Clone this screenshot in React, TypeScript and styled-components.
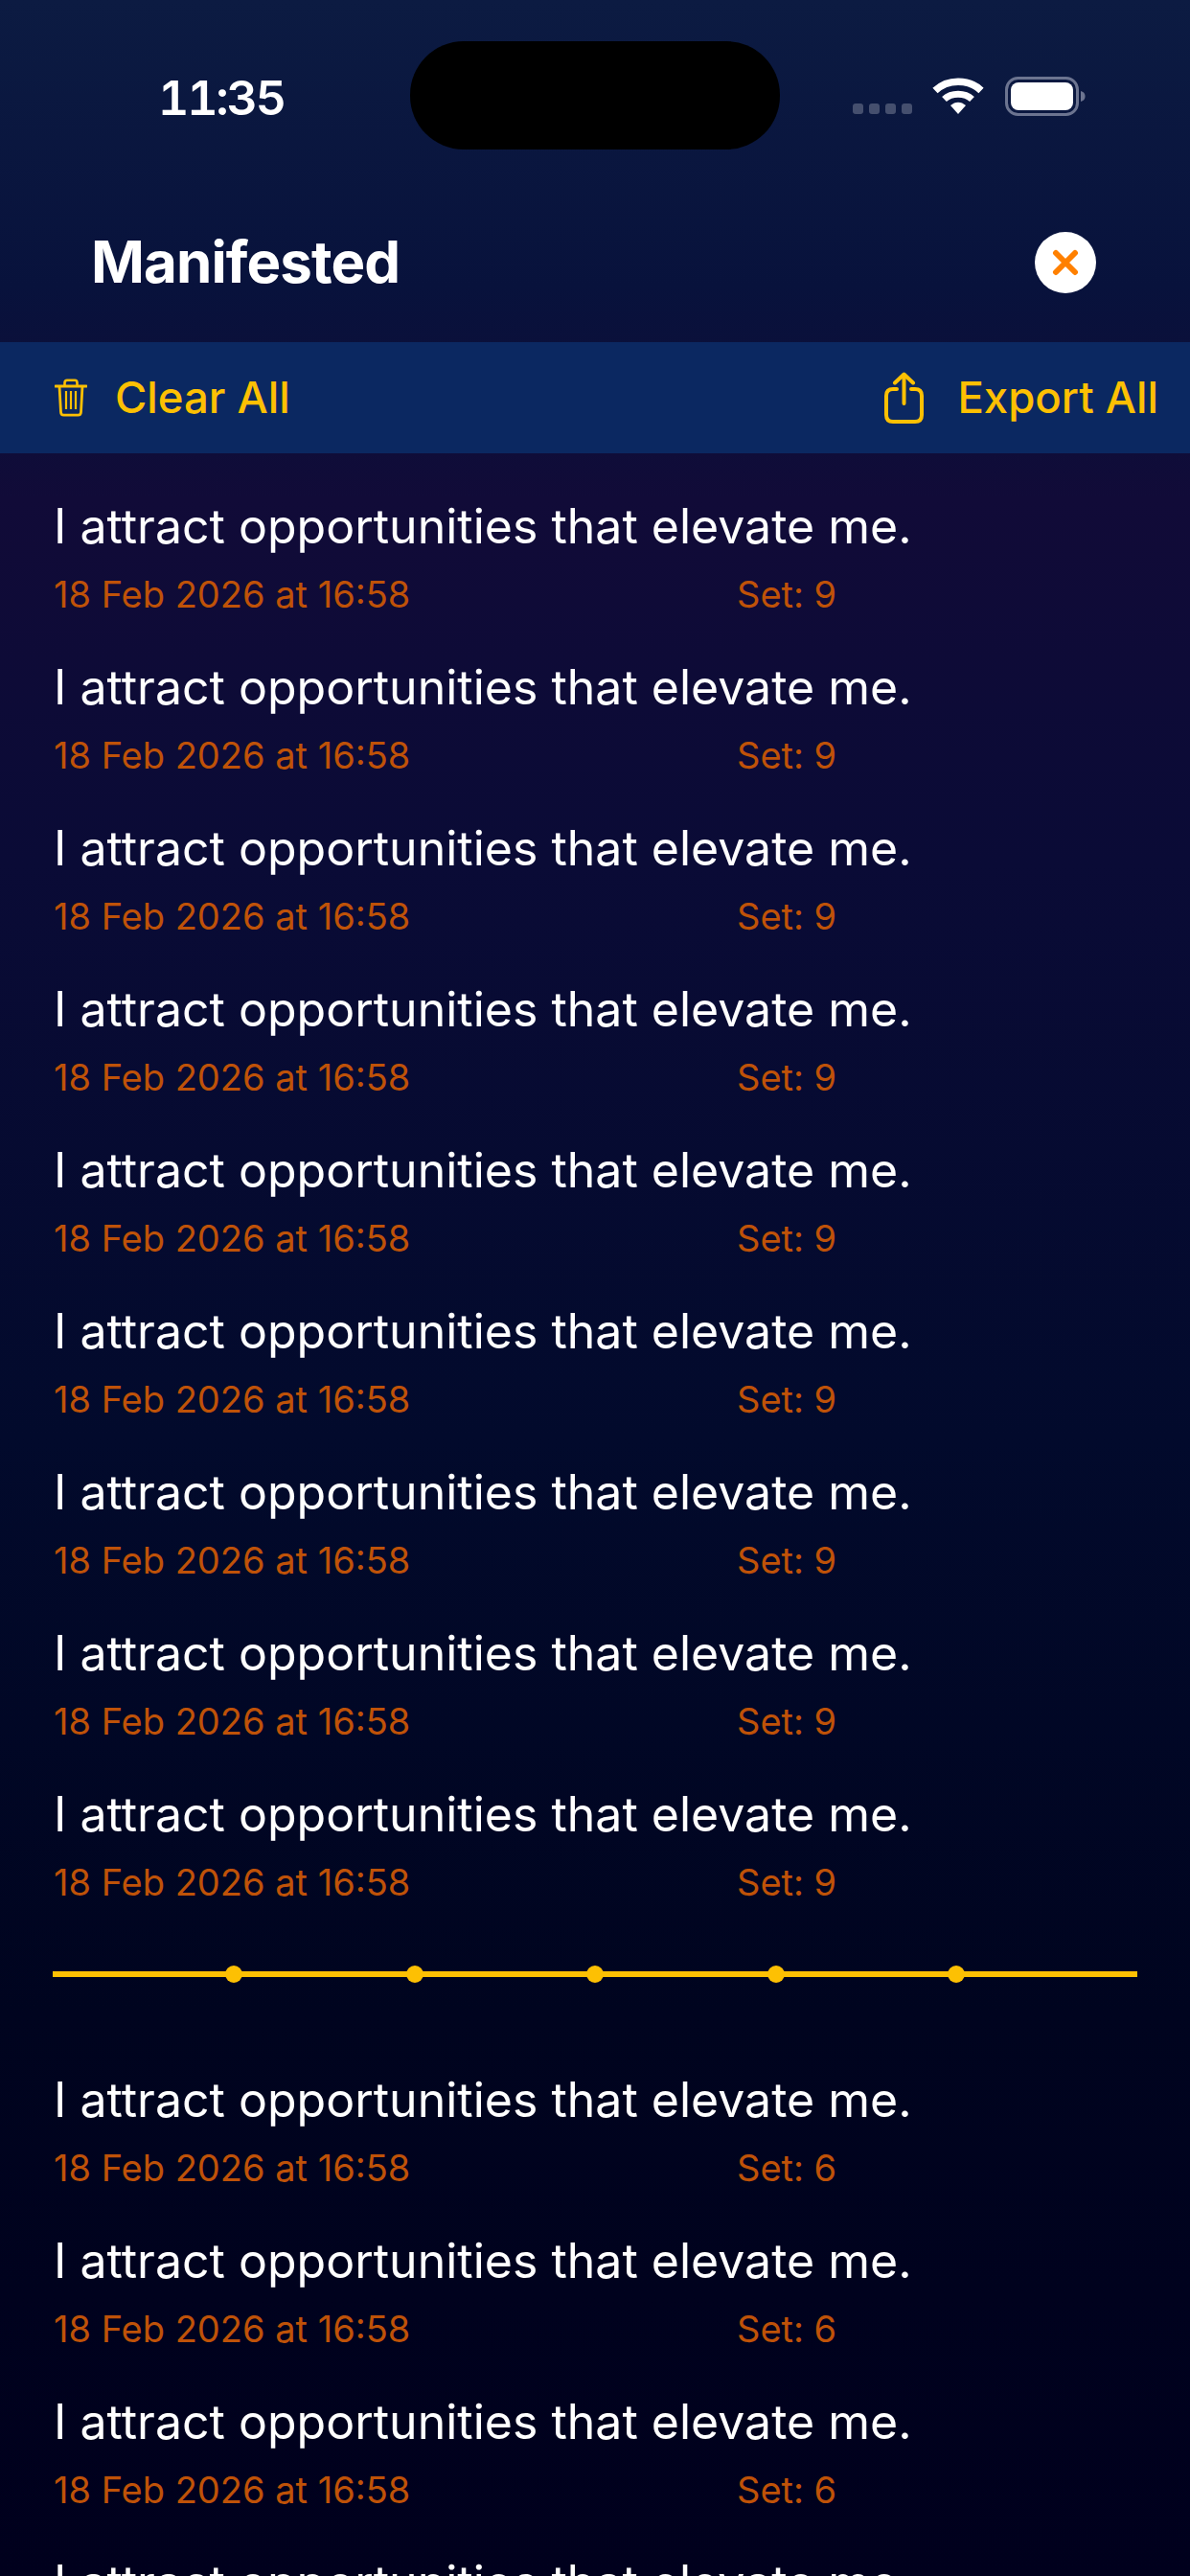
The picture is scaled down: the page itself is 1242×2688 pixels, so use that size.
import React from 'react';
import styled, { createGlobalStyle } from 'styled-components';

const GlobalStyle = createGlobalStyle`
  html, body {
    margin: 0;
    padding: 0;
    background: #00001e;
  }
  body {
    font-family: Inter, "Liberation Sans", sans-serif;
  }
`;

const Screen = styled.div`
  width: 1242px;
  height: 2688px;
  overflow: hidden;
  display: flex;
  flex-direction: column;
  background: linear-gradient(
    180deg,
    #0c1b42 0,
    #08123c 300px,
    #110b38 520px,
    #0a0b36 900px,
    #020a2c 1500px,
    #00041f 2100px,
    #00001d 2688px
  );
`;

const StatusBar = styled.div`
  height: 156px;
  flex: none;
  padding-top: 43px;
  box-sizing: border-box;
  display: grid;
  grid-template-columns: 428px 386px 1fr;
`;

const Time = styled.div`
  padding: 31px 0 0 165px;
  font-size: 50px;
  line-height: 56px;
  font-weight: 600;
  font-variant-numeric: tabular-nums;
  letter-spacing: -2.2px;
  color: #fff;
`;

const Island = styled.div`
  height: 113px;
  background: #000;
  border-radius: 56px;
`;

const StatusIcons = styled.div`
  display: flex;
  align-items: flex-start;
  padding: 37px 0 0 76px;
`;

const Signal = styled.div`
  display: flex;
  gap: 6px;
  margin-top: 28px;
  margin-right: 21px;
`;

const SignalDot = styled.span`
  width: 11px;
  height: 11px;
  border-radius: 3px;
  background: #454f6e;
`;

const WifiIcon = styled.svg`
  width: 54px;
  height: 40px;
  margin-right: 22px;
`;

const BatteryIcon = styled.svg`
  width: 86px;
  height: 42px;
`;

const TitleBar = styled.div`
  height: 201px;
  flex: none;
  box-sizing: border-box;
  padding: 0 98px 0 95px;
  display: flex;
  align-items: flex-start;
  justify-content: space-between;
`;

const Title = styled.h1`
  margin: 81px 0 0;
  font-size: 60px;
  line-height: 72px;
  font-weight: 700;
  letter-spacing: -0.9px;
  color: #fff;
`;

const CloseButton = styled.div`
  width: 64px;
  height: 64px;
  margin-top: 86px;
  border-radius: 50%;
  background: #fff;
  display: flex;
  align-items: center;
  justify-content: center;
`;

const Toolbar = styled.div`
  height: 116px;
  flex: none;
  box-sizing: border-box;
  padding: 0 33px 0 57px;
  display: flex;
  align-items: center;
  justify-content: space-between;
  background: #0b2861;
`;

const ToolButton = styled.div<{ $gap: number }>`
  display: flex;
  align-items: center;
  gap: ${(p) => p.$gap}px;
  font-size: 45.5px;
  line-height: 54px;
  font-weight: 500;
  color: #fdc003;
`;

const List = styled.div`
  padding: 46px 0 0 56px;
`;

const Row = styled.div`
  height: 168px;
  box-sizing: border-box;
`;

const Phrase = styled.div`
  font-size: 50px;
  line-height: 60px;
  font-weight: 400;
  color: #fff;
`;

const Meta = styled.div`
  margin-top: 19px;
  display: grid;
  grid-template-columns: 713px 1fr;
  font-size: 38px;
  line-height: 44px;
  color: #bf5208;
`;

const Divider = styled.div`
  margin: 26px 55px 98px -1px;
  height: 6px;
  background: #fdc003;
  display: flex;
  align-items: center;
  padding-left: 180px;
  gap: 170.5px;
`;

const DividerDot = styled.span`
  width: 18px;
  height: 18px;
  flex: none;
  border-radius: 50%;
  background: #fdc003;
`;

const phrase = 'I attract opportunities that elevate me.';
const when = '18 Feb 2026 at 16:58';

const Entry = ({ set }: { set: number }) => (
  <Row>
    <Phrase>{phrase}</Phrase>
    <Meta>
      <span>{when}</span>
      <span>Set: {set}</span>
    </Meta>
  </Row>
);

export default function App() {
  return (
    <Screen>
      <GlobalStyle />
      <StatusBar>
        <Time>11:35</Time>
        <Island />
        <StatusIcons>
          <Signal>
            {[0, 1, 2, 3].map((i) => (
              <SignalDot key={i} />
            ))}
          </Signal>
          <WifiIcon viewBox="0 0 54 40" fill="none">
            <path d="M3 14.5C16 2 38 2 51 14.5" stroke="#fff" strokeWidth="7.5" />
            <path d="M12.5 23.5C20 16.5 34 16.5 41.5 23.5" stroke="#fff" strokeWidth="7" />
            <path d="M19 30L27 39L35 30C30 25.5 24 25.5 19 30Z" fill="#fff" />
          </WifiIcon>
          <BatteryIcon viewBox="0 0 86 42" fill="none">
            <rect x="1.5" y="1.5" width="74" height="38" rx="12" stroke="#6c7490" strokeWidth="3" />
            <rect x="6" y="6" width="65" height="29" rx="8" fill="#fff" />
            <path d="M79 15C82.5 16 83.5 18 83.5 20.5C83.5 23 82.5 25 79 26Z" fill="#6c7490" />
          </BatteryIcon>
        </StatusIcons>
      </StatusBar>

      <TitleBar>
        <Title>Manifested</Title>
        <CloseButton>
          <svg width="28" height="28" viewBox="0 0 28 28" fill="none">
            <path d="M4 4L24 24M24 4L4 24" stroke="#ff8000" strokeWidth="6" strokeLinecap="round" />
          </svg>
        </CloseButton>
      </TitleBar>

      <Toolbar>
        <ToolButton $gap={29}>
          <svg width="34" height="40" viewBox="0 0 34 40" fill="none" stroke="#fdc003">
            <path d="M1 8H33" strokeWidth="3" strokeLinecap="round" />
            <path d="M10.5 7.5V4.5C10.5 2.8 11.5 1.8 13 1.8H21C22.5 1.8 23.5 2.8 23.5 4.5V7.5" strokeWidth="2.6" />
            <path d="M5 8L6.5 35C6.6 37 7.8 38.2 9.6 38.2H24.4C26.2 38.2 27.4 37 27.5 35L29 8" strokeWidth="2.8" />
            <path d="M12 13V32M17 13V32M22 13V32" strokeWidth="2.2" />
          </svg>
          Clear All
        </ToolButton>
        <ToolButton $gap={35}>
          <svg width="41" height="54" viewBox="0 0 41 54" fill="none" stroke="#fdc003" strokeWidth="4" strokeLinecap="round" strokeLinejoin="round">
            <path d="M13 18H9C4.5 18 2 20.5 2 25V45C2 49.5 4.5 52 9 52H32C36.5 52 39 49.5 39 45V25C39 20.5 36.5 18 32 18H28" />
            <path d="M20.5 33V3M11 11.5L20.5 2.5L30 11.5" />
          </svg>
          Export All
        </ToolButton>
      </Toolbar>

      <List>
        {Array.from({ length: 9 }, (_, i) => (
          <Entry key={i} set={9} />
        ))}
        <Divider>
          {[0, 1, 2, 3, 4].map((i) => (
            <DividerDot key={i} />
          ))}
        </Divider>
        {Array.from({ length: 4 }, (_, i) => (
          <Entry key={i} set={6} />
        ))}
      </List>
    </Screen>
  );
}
